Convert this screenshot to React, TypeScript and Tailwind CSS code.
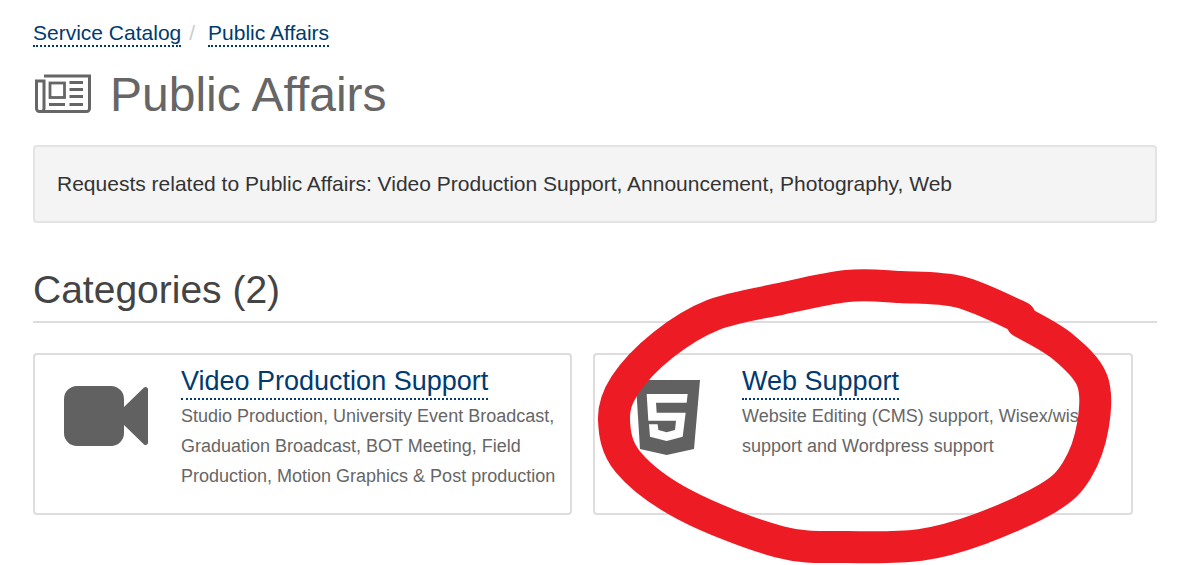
import React from 'react';

// centre line of the hand drawn marker ring
const ringPoints: [number, number][] = [
  [1022, 322], [1062, 346], [1092, 380], [1093, 425], [1077, 470], [1048, 498], [980, 529], [920, 545],
  [847, 547], [780, 542], [685, 505], [628, 462], [614, 420], [625, 385], [663, 345], [713, 315],
  [780, 299], [847, 286], [900, 287], [960, 292], [1020, 317],
];

const smoothPath = (pts: [number, number][]) => {
  let d = `M${pts[0][0]} ${pts[0][1]}`;
  for (let i = 0; i < pts.length - 1; i++) {
    const p0 = pts[Math.max(i - 1, 0)];
    const p1 = pts[i];
    const p2 = pts[i + 1];
    const p3 = pts[Math.min(i + 2, pts.length - 1)];
    d += ` C${p1[0] + (p2[0] - p0[0]) / 6} ${p1[1] + (p2[1] - p0[1]) / 6} ${p2[0] - (p3[0] - p1[0]) / 6} ${p2[1] - (p3[1] - p1[1]) / 6} ${p2[0]} ${p2[1]}`;
  }
  return d;
};

const linkClass = 'text-[#003a70] border-b-2 border-dotted border-[#003a70]';

const NewspaperIcon = () => (
  <svg className="w-[56px] h-[39px] ml-[2px] mr-[19px] mb-[4px] shrink-0" viewBox="0 0 56 39" fill="none" stroke="#666666" strokeWidth="3">
    <path d="M9 2H54.5V34.5a3 3 0 0 1-3 3H4.5a3 3 0 0 1-3-3V7H9V34.5a3 3 0 0 1-3 3" />
    <rect x="15" y="9" width="14.5" height="14.5" strokeWidth="2.8" />
    <path d="M34.5 8.5H48M34.5 15.5H48M34.5 22.5H48M14 30.5H30M34.5 30.5H48" strokeWidth="2.8" />
  </svg>
);

const VideoIcon = () => (
  <svg className="w-[84px] h-[60px] ml-[29px] mt-[31px]" viewBox="0 0 84 60" fill="#616161">
    <path d="M13 0H47a13 13 0 0 1 13 13V21L80 1.6C81.6 0.2 84 1 84 3.4V56.6C84 59 81.6 59.8 80 58.4L60 39V47a13 13 0 0 1-13 13H13A13 13 0 0 1 0 47V13A13 13 0 0 1 13 0Z" />
  </svg>
);

const Html5Icon = () => (
  <svg className="w-[76px] h-[85px] ml-[35px] mt-[20px]" viewBox="0 0 228 255">
    <path fill="#616161" d="M17 15H210L192 222L110 240L30 222Z" />
    <path fill="#ffffff" d="M50 57H173L170 83H78L80 113H167L158 185L110 198L60 185L57 148H83L85 165L110 172L135 165L138 137H55Z" />
  </svg>
);

const CategoryCard: React.FC<{ icon: React.ReactNode; title: string; lines: string[]; width: string; column: string }> = ({ icon, title, lines, width, column }) => (
  <div className={`flex h-[162px] border-2 border-[#dddddd] rounded-[4px] bg-white ${width}`}>
    <div className={`shrink-0 ${column}`}>{icon}</div>
    <div className="pt-[8px] min-w-0 overflow-hidden">
      <div className="h-[38px] leading-[36px] text-[27px]">
        <a className={linkClass + ' pb-[2px]'}>{title}</a>
      </div>
      {lines.map((line) => (
        <p key={line} className="h-[30px] leading-[30px] text-[18px] text-[#666666] whitespace-nowrap">{line}</p>
      ))}
    </div>
  </div>
);

export default function App() {
  return (
    <div className="relative w-[1179px] h-[565px] overflow-hidden bg-white font-['Liberation_Sans',Arial,sans-serif] px-[33px] pt-[18px]">
      <nav className="flex items-center h-[30px] text-[21px]">
        <a className={linkClass + ' leading-[25px]'}>Service Catalog</a>
        <span className="text-[#cccccc] ml-[8px] mr-[13px]">/</span>
        <a className={linkClass + ' leading-[25px]'}>Public Affairs</a>
      </nav>

      <h1 className="flex items-center h-[60px] mt-[17px] text-[48px] text-[#666666]">
        <NewspaperIcon />
        Public Affairs
      </h1>

      <div className="w-[1124px] h-[78px] mt-[20px] flex items-center px-[22px] bg-[#f4f4f4] border-2 border-[#e3e3e3] rounded-[4px] text-[21px] text-[#333333]">
        Requests related to Public Affairs: Video Production Support, Announcement, Photography, Web
      </div>

      <h2 className="w-[1124px] h-[62px] mt-[38px] border-b-2 border-[#dddddd] text-[39px] leading-[58px] text-[#444444]">Categories (2)</h2>

      <div className="flex gap-[21px] mt-[30px]">
        <CategoryCard
          width="w-[539px]"
          column="w-[146px]"
          icon={<VideoIcon />}
          title="Video Production Support"
          lines={['Studio Production, University Event Broadcast,', 'Graduation Broadcast, BOT Meeting, Field', 'Production, Motion Graphics & Post production']}
        />
        <CategoryCard
          width="w-[540px]"
          column="w-[147px]"
          icon={<Html5Icon />}
          title="Web Support"
          lines={['Website Editing (CMS) support, Wisex/wisex', 'support and Wordpress support']}
        />
      </div>

      <svg className="absolute inset-0 pointer-events-none" width="1179" height="565" viewBox="0 0 1179 565" fill="none">
        <path d={smoothPath(ringPoints)} stroke="#ed1c24" strokeWidth="32" strokeLinecap="round" strokeLinejoin="round" />
      </svg>
    </div>
  );
}
